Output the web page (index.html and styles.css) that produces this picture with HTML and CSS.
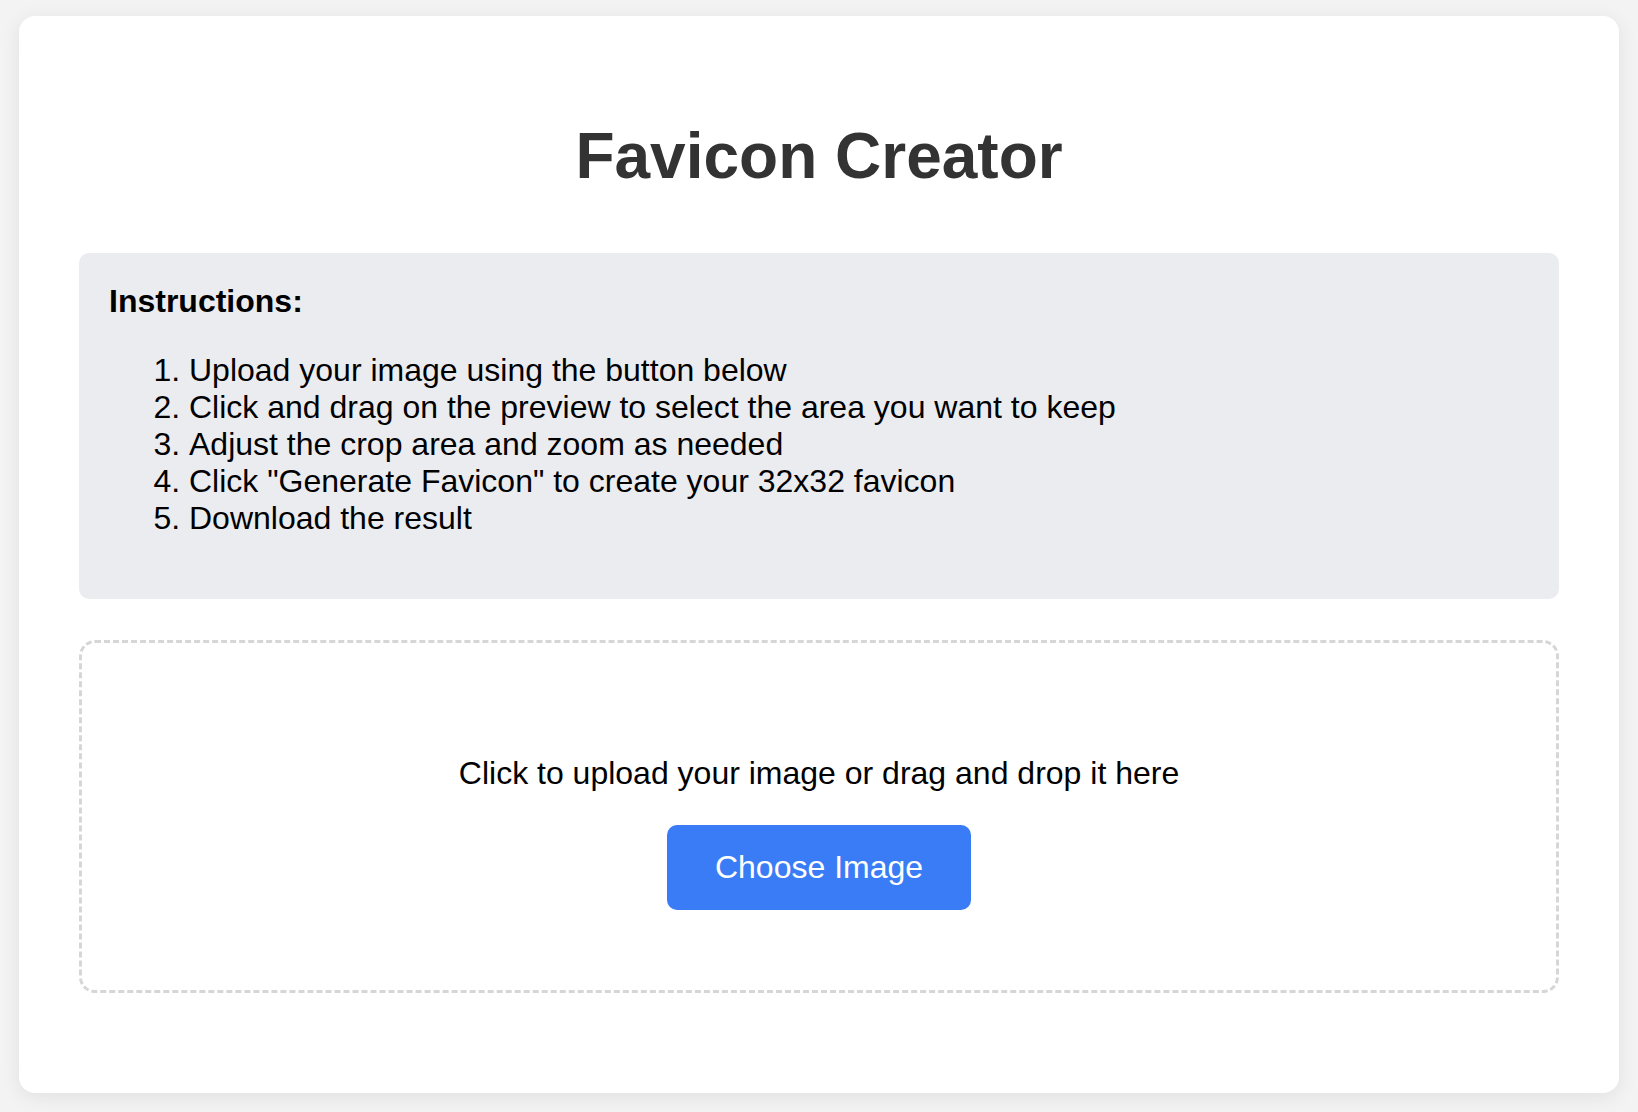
FILE: index.html
```html
<!DOCTYPE html>
<html lang="en">
<head>
<meta charset="utf-8">
<title>Favicon Creator</title>
<link rel="stylesheet" href="styles.css">
</head>
<body>
<main class="card">
  <h1 class="title">Favicon Creator</h1>
  <section class="instructions">
    <p class="instructions-heading">Instructions:</p>
    <ol class="steps">
      <li>Upload your image using the button below</li>
      <li>Click and drag on the preview to select the area you want to keep</li>
      <li>Adjust the crop area and zoom as needed</li>
      <li>Click "Generate Favicon" to create your 32x32 favicon</li>
      <li>Download the result</li>
    </ol>
  </section>
  <section class="dropzone">
    <p class="dropzone-text">Click to upload your image or drag and drop it here</p>
    <button class="choose-btn" type="button">Choose Image</button>
  </section>
</main>
</body>
</html>
```

FILE: styles.css
```css
html, body {
  margin: 0;
  padding: 0;
}

body {
  background: #f3f3f3;
  font-family: "Liberation Sans", Arial, Helvetica, sans-serif;
  color: #000;
  padding: 16px 0 20px;
}

.card {
  display: block;
  max-width: 1600px;
  margin: 0 auto;
  box-sizing: border-box;
  background: #ffffff;
  border-radius: 16px;
  padding: 60px;
  box-shadow: 0 4px 20px rgba(0, 0, 0, 0.08);
}

.title {
  font-size: 64px;
  font-weight: bold;
  color: #333333;
  text-align: center;
  line-height: normal;
  margin: 42.9px 0 60px;
}

.instructions {
  background: #ebecf0;
  border-radius: 10px;
  padding: 30px;
}

.instructions-heading {
  margin: 0;
  font-size: 32px;
  font-weight: bold;
  line-height: normal;
}

.steps {
  margin: 32px 0;
  padding-left: 80px;
  font-size: 32px;
  line-height: normal;
}

.dropzone {
  margin: 41px 0 40px;
  border: 3px dashed #d6d6d6;
  border-radius: 16px;
  padding: 80px;
  display: flex;
  flex-direction: column;
  align-items: center;
}

.dropzone-text {
  margin: 32px 0 33px;
  font-size: 32px;
  line-height: normal;
  text-align: center;
}

.choose-btn {
  font-family: "Liberation Sans", Arial, Helvetica, sans-serif;
  font-size: 32px;
  line-height: normal;
  color: #ffffff;
  background: #3a7cf6;
  border: none;
  border-radius: 10px;
  padding: 24px 48px;
  cursor: pointer;
}
```
